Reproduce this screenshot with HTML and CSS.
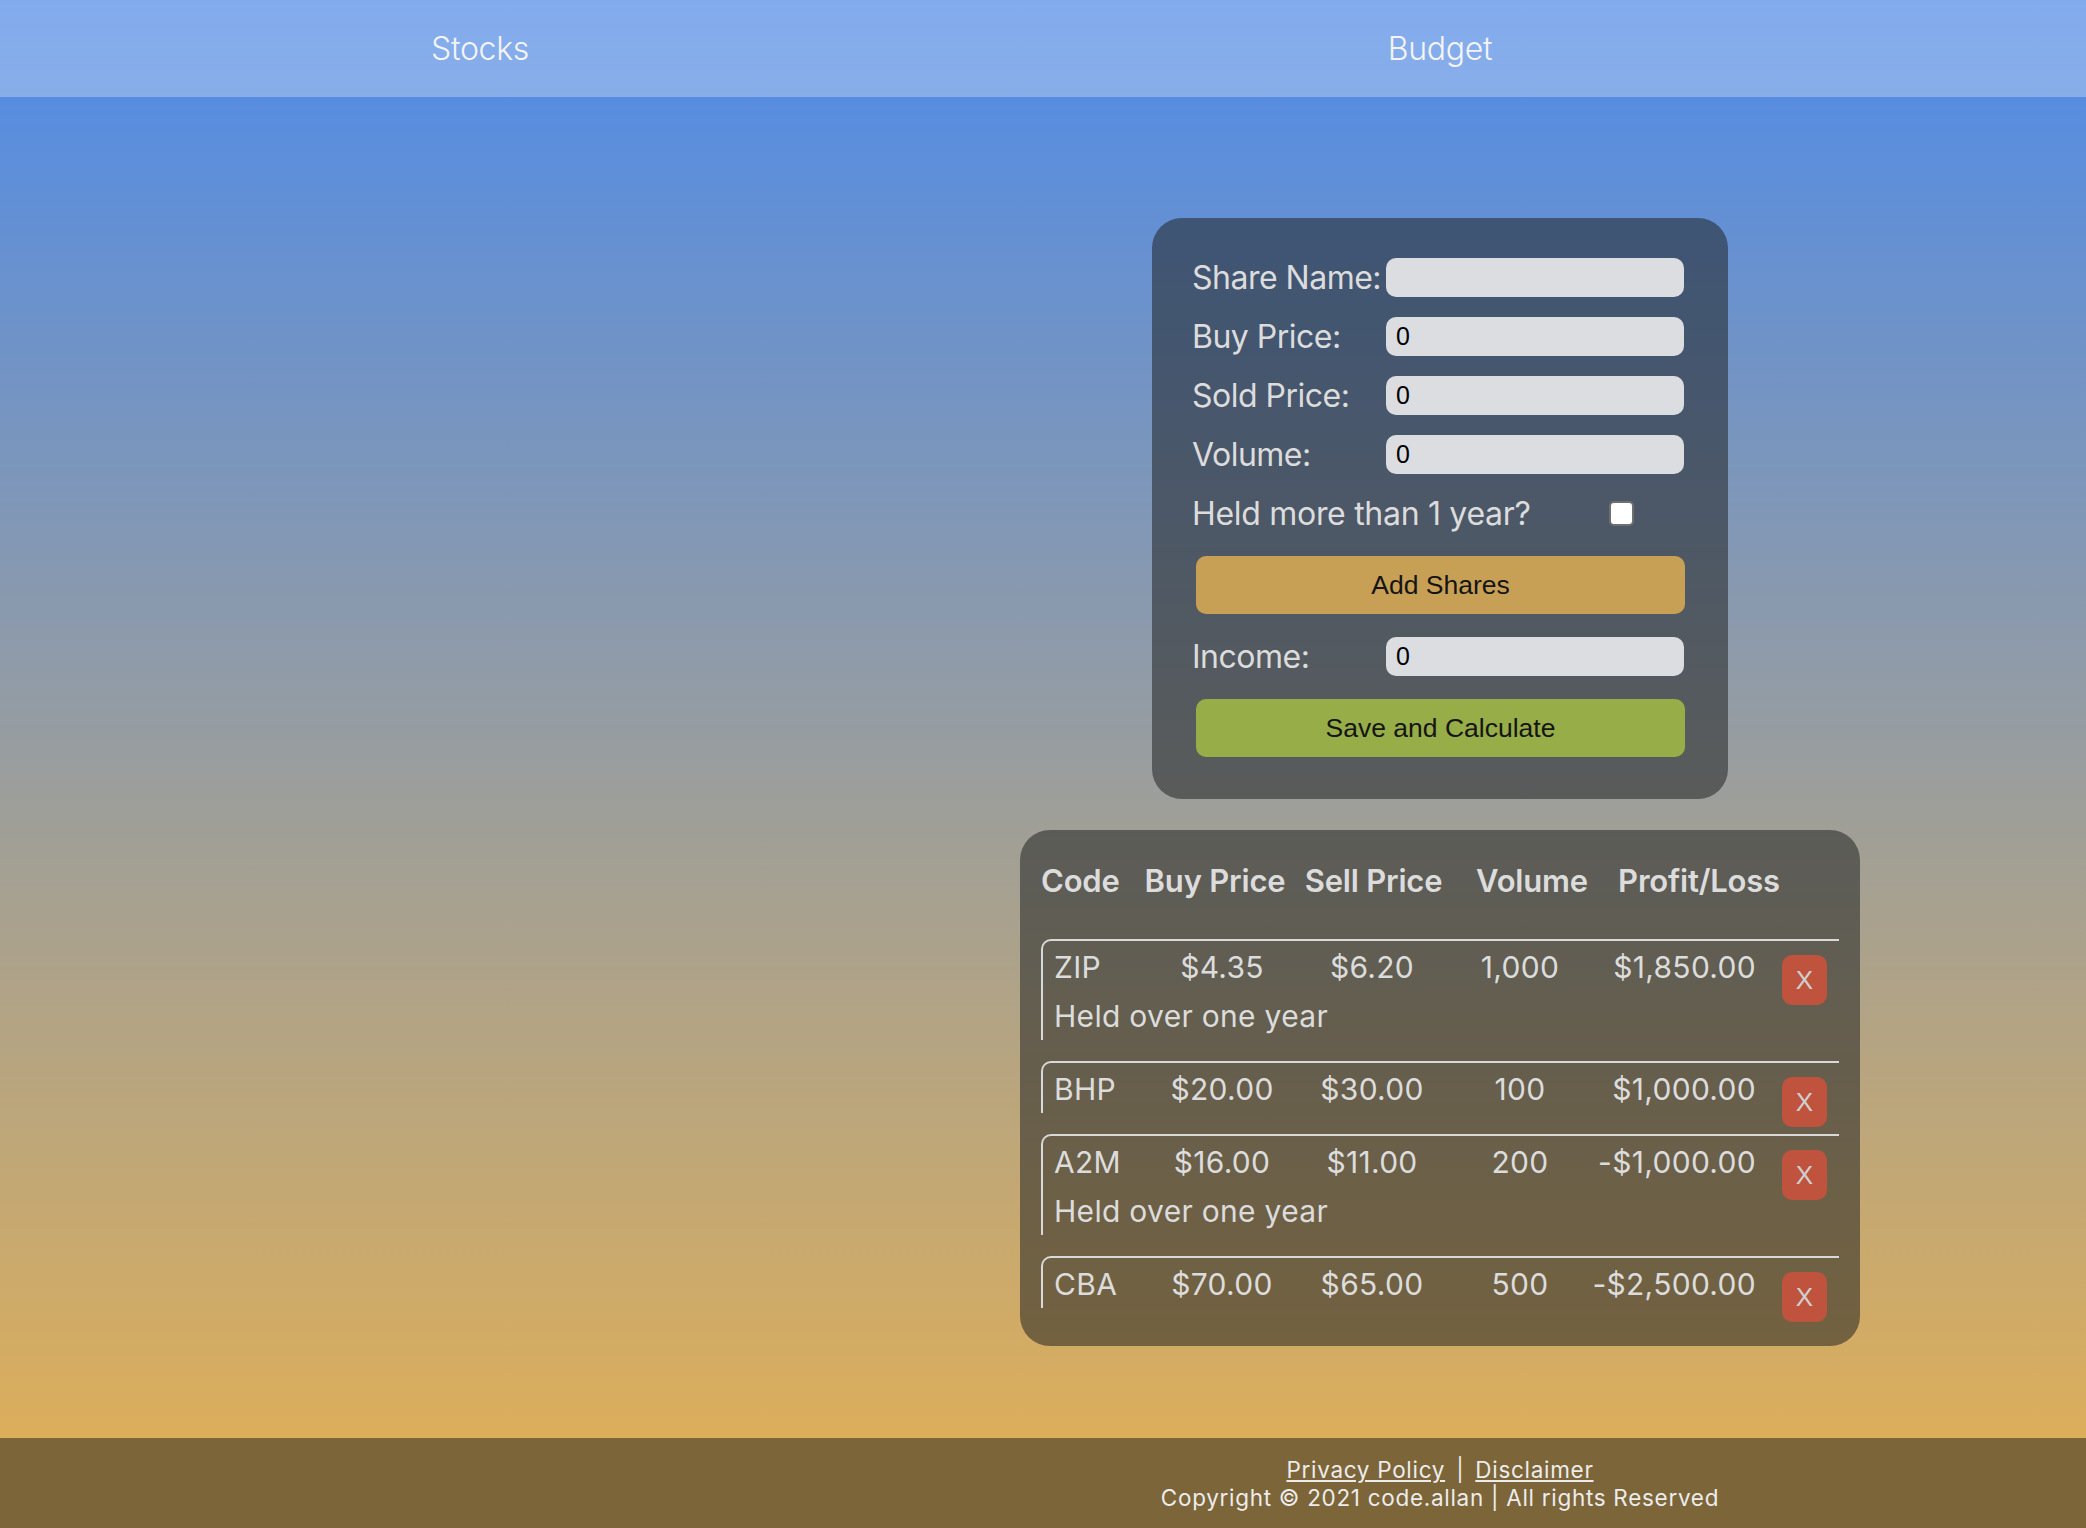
FILE: index.html
```html
<!DOCTYPE html>
<html lang="en">
<head>
<meta charset="utf-8">
<title>Stocks</title>
<link rel="stylesheet" href="styles.css">
</head>
<body>
<header class="topbar">
  <a class="nav-link">Stocks</a>
  <a class="nav-link">Budget</a>
</header>
<main class="main">
  <div class="left-col"></div>
  <div class="right-col">
    <section class="form-card">
      <div class="field-row">
        <label class="field-label">Share Name:</label>
        <input class="field-input" type="text" value="">
      </div>
      <div class="field-row">
        <label class="field-label">Buy Price:</label>
        <input class="field-input" type="text" value="0">
      </div>
      <div class="field-row">
        <label class="field-label">Sold Price:</label>
        <input class="field-input" type="text" value="0">
      </div>
      <div class="field-row">
        <label class="field-label">Volume:</label>
        <input class="field-input" type="text" value="0">
      </div>
      <div class="check-row">
        <label class="field-label">Held more than 1 year?</label>
        <input class="check" type="checkbox">
      </div>
      <button class="btn btn-add">Add Shares</button>
      <div class="field-row income-row">
        <label class="field-label">Income:</label>
        <input class="field-input" type="text" value="0">
      </div>
      <button class="btn btn-save">Save and Calculate</button>
    </section>

    <section class="table-card">
      <div class="table-head">
        <span class="th th-code">Code</span>
        <span class="th">Buy Price</span>
        <span class="th">Sell Price</span>
        <span class="th">Volume</span>
        <span class="th">Profit/Loss</span>
      </div>

      <div class="share-row">
        <span class="td td-code">ZIP</span>
        <span class="td">$4.35</span>
        <span class="td">$6.20</span>
        <span class="td">1,000</span>
        <span class="td td-pl">$1,850.00</span>
        <button class="del">X</button>
        <span class="td held">Held over one year</span>
      </div>

      <div class="share-row">
        <span class="td td-code">BHP</span>
        <span class="td">$20.00</span>
        <span class="td">$30.00</span>
        <span class="td">100</span>
        <span class="td td-pl">$1,000.00</span>
        <button class="del">X</button>
      </div>

      <div class="share-row">
        <span class="td td-code">A2M</span>
        <span class="td">$16.00</span>
        <span class="td">$11.00</span>
        <span class="td">200</span>
        <span class="td td-pl">-$1,000.00</span>
        <button class="del">X</button>
        <span class="td held">Held over one year</span>
      </div>

      <div class="share-row">
        <span class="td td-code">CBA</span>
        <span class="td">$70.00</span>
        <span class="td">$65.00</span>
        <span class="td">500</span>
        <span class="td td-pl">-$2,500.00</span>
        <button class="del">X</button>
      </div>
    </section>
  </div>
</main>
<footer class="footer">
  <div class="left-col"></div>
  <div class="footer-text">
    <div><a class="foot-link">Privacy Policy</a><span class="sep">|</span><a class="foot-link">Disclaimer</a></div>
    <div>Copyright © 2021 code.allan | All rights Reserved</div>
  </div>
</footer>
</body>
</html>
```

FILE: styles.css
```css
* { box-sizing: border-box; }

html, body {
  margin: 0;
  padding: 0;
}

body {
  width: 2086px;
  min-height: 1528px;
  display: flex;
  flex-direction: column;
  font-family: Inter, "Noto Sans", sans-serif;
}

.topbar {
  height: 97px;
  display: grid;
  grid-template-columns: 960px 960px;
  align-items: center;
  background: linear-gradient(#82abee, #88aee8);
}

.nav-link {
  text-align: center;
  color: #f4f4f4;
  font-size: 32px;
  font-weight: 300;
  letter-spacing: -0.3px;
}

.main {
  flex: 1;
  display: grid;
  grid-template-columns: 960px 960px;
  background: linear-gradient(#578de0, #dcae5b);
  padding-top: 121px;
}

.right-col {
  display: flex;
  flex-direction: column;
  align-items: center;
}

.form-card {
  width: 576px;
  padding: 40px 40px 42px 40px;
  border-radius: 30px;
  background: rgba(30, 33, 33, 0.53);
  color: #dcdcdc;
}

.field-row {
  display: flex;
  align-items: center;
  height: 39px;
  margin-bottom: 20px;
}

.field-label {
  width: 194px;
  flex: none;
  font-size: 32px;
  letter-spacing: -0.5px;
  white-space: nowrap;
  color: #dcdcdc;
}

.field-input {
  width: 298px;
  height: 39px;
  border: none;
  border-radius: 10px;
  background: #dcdde1;
  padding: 0 10px;
  font-family: "Liberation Sans", Arial, sans-serif;
  font-size: 25px;
  color: #000;
  outline: none;
}

.check-row {
  display: flex;
  align-items: center;
  height: 39px;
}

.check-row .field-label {
  width: auto;
  letter-spacing: -0.3px;
}

.check {
  appearance: none;
  -webkit-appearance: none;
  margin: 0 54px 0 auto;
  width: 25px;
  height: 25px;
  border: 2px solid #6f6f72;
  border-radius: 5px;
  background: #fff;
}

.btn {
  display: block;
  width: 489px;
  height: 58px;
  margin: 23px 4px 0 4px;
  border: none;
  border-radius: 10px;
  font-family: "Liberation Sans", Arial, sans-serif;
  font-size: 26.5px;
  color: #151515;
}

.btn-add { background: #c8a055; }
.btn-save { background: #97ad48; }

.income-row {
  margin-top: 23px;
  margin-bottom: 0;
}

.table-card {
  width: 840px;
  margin-top: 31px;
  padding: 32px 21px 38px 21px;
  border-radius: 30px;
  background: rgba(30, 33, 33, 0.53);
  color: #dcdcdc;
}

.table-head {
  display: grid;
  grid-template-columns: 93px 162px 155px 162px 172px;
  line-height: 38px;
  margin-bottom: 39px;
}

.th {
  font-size: 31px;
  font-weight: 600;
  text-align: center;
  white-space: nowrap;
  letter-spacing: -0.2px;
}

.th-code { text-align: left; }

.share-row {
  display: grid;
  grid-template-columns: 96px 144px 156px 140px 192px 45px;
  grid-auto-rows: 49px;
  align-items: center;
  border-top: 2px solid #d9d9d9;
  border-left: 2px solid #d9d9d9;
  border-top-left-radius: 10px;
  padding: 1px 12px 0 11px;
  margin-bottom: 21px;
}

.share-row:last-child { margin-bottom: 0; }

.td {
  font-size: 30px;
  text-align: center;
  white-space: nowrap;
  letter-spacing: 0.3px;
}

.td-code { text-align: left; }

.td-pl {
  text-align: right;
  padding-right: 26px;
}

.held {
  grid-column: 1 / 6;
  text-align: left;
}

.del {
  align-self: start;
  width: 45px;
  height: 50px;
  margin-top: 13px;
  margin-bottom: -20px;
  padding: 0;
  border: none;
  border-radius: 10px;
  background: #c0533e;
  color: #cfcfcf;
  font-family: "Liberation Sans", Arial, sans-serif;
  font-size: 26px;
}

.footer {
  height: 90px;
  display: grid;
  grid-template-columns: 960px 960px;
  background: #7c6538;
  color: #ececec;
}

.footer-text {
  padding-top: 18px;
  text-align: center;
  font-size: 22.5px;
  line-height: 28px;
  letter-spacing: 0.7px;
}

.sep {
  margin: 0 11px;
}

.foot-link {
  color: #ececec;
  text-decoration: underline;
}
```
